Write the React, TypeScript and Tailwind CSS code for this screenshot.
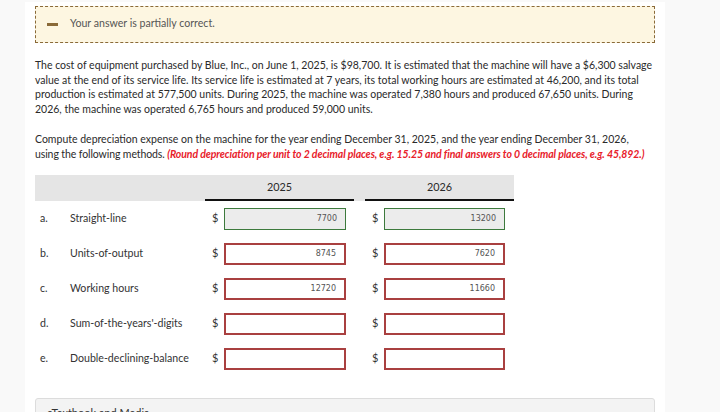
const rows = [
  { key: "a.", name: "Straight-line", y1: "7700", y2: "13200", ok: true },
  { key: "b.", name: "Units-of-output", y1: "8745", y2: "7620", ok: false },
  { key: "c.", name: "Working hours", y1: "12720", y2: "11660", ok: false },
  { key: "d.", name: "Sum-of-the-years'-digits", y1: "", y2: "", ok: false },
  { key: "e.", name: "Double-declining-balance", y1: "", y2: "", ok: false },
];

function Amount({ value, ok, w }: { value: string; ok: boolean; w: string }) {
  return (
    <div className="flex items-center">
      <span className="w-[19px] pl-[7px] text-[11px] leading-none text-[#333] -mt-[3px]">$</span>
      <div
        className={
          (ok ? "border border-[#3d7a3d] bg-[#ececec] " : "border-2 border-[#a94040] bg-white ") +
          w +
          " h-[22px] flex items-center justify-end pr-[8px] text-[8px] text-[#555] font-['DejaVu_Sans',sans-serif]"
        }
      >
        {value}
      </div>
    </div>
  );
}

export default function App() {
  return (
    <div className="h-[412px] overflow-hidden bg-[#f9f9f9] pt-[2px] font-['Lato',sans-serif] text-[#2a2a2a]">
      <div className="ml-[25px] w-[640px] h-[410px] bg-white px-[10px] pt-[4px]">
        <div className="h-[37px] border border-dashed border-[#8a6a38] bg-[#fdf6e1] flex items-center">
          <div className="ml-[11px] w-[11px] h-[3px] bg-[#8a6a38]" />
          <span className="ml-[12px] text-[10.6px] text-[#555] -mt-[1px]">Your answer is partially correct.</span>
        </div>

        <div className="mt-[15px] text-[10.5px] leading-[14.7px] whitespace-nowrap">
          <p>The cost of equipment purchased by Blue, Inc., on June 1, 2025, is $98,700. It is estimated that the machine will have a $6,300 salvage</p>
          <p>value at the end of its service life. Its service life is estimated at 7 years, its total working hours are estimated at 46,200, and its total</p>
          <p>production is estimated at 577,500 units. During 2025, the machine was operated 7,380 hours and produced 67,650 units. During</p>
          <p>2026, the machine was operated 6,765 hours and produced 59,000 units.</p>
        </div>

        <div className="mt-[15px] text-[10.5px] leading-[14.7px] whitespace-nowrap">
          <p>Compute depreciation expense on the machine for the year ending December 31, 2025, and the year ending December 31, 2026,</p>
          <p className="tracking-[-0.1px]">
            using the following methods.{" "}
            <span className="font-bold italic text-[#e8202a]">
              (Round depreciation per unit to 2 decimal places, e.g. 15.25 and final answers to 0 decimal places, e.g. 45,892.)
            </span>
          </p>
        </div>

        <div className="mt-[14px] w-[479px]">
          <div className="flex h-[26px] bg-[#e5e5e5] text-[10.8px]">
            <div className="w-[170px]" />
            <div className="w-[149px] flex items-center justify-center border-b-2 border-[#111]">2025</div>
            <div className="w-[11px]" />
            <div className="w-[149px] flex items-center justify-center border-b-2 border-[#111]">2026</div>
          </div>
          {rows.map((r) => (
            <div key={r.key} className="flex h-[35px] items-center text-[10.6px] text-[#333]">
              <div className="w-[170px] flex items-center">
                <span className="w-[35px] pl-[5px]">{r.key}</span>
                <span>{r.name}</span>
              </div>
              <div className="w-[149px]">
                <Amount value={r.y1} ok={r.ok} w="w-[122px]" />
              </div>
              <div className="w-[11px]" />
              <div className="w-[149px]">
                <Amount value={r.y2} ok={r.ok} w="w-[121px]" />
              </div>
            </div>
          ))}
        </div>

        <div className="mt-[22px] h-[40px] border border-[#dcdcdc] rounded-tl-[3px] rounded-tr-[3px] bg-[#f3f3f3] pl-[11px] pt-[6px] text-[11px] text-[#333]">
          eTextbook and Media
        </div>
      </div>
    </div>
  );
}
